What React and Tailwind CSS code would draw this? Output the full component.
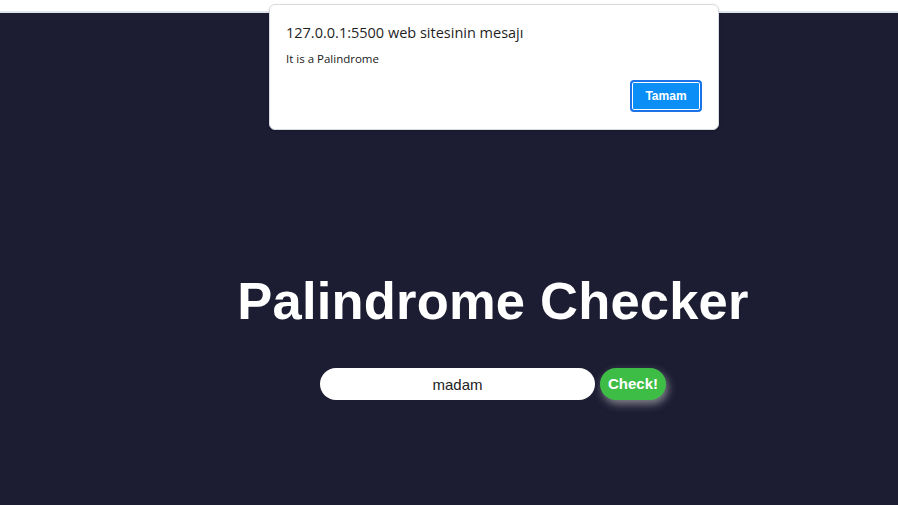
import React from "react";

const App = () => {
  return (
    <div className="relative w-[898px] h-[505px] overflow-hidden bg-white">
      <div className="h-[11px] bg-white" />
      <div className="h-[2px] bg-[#dfe3ea]" />
      {/* pagina principal */}
      <div className="h-[492px] bg-[#1c1c33] flex flex-col items-center pl-[88px] pt-[258px] font-['Liberation_Sans',Arial,sans-serif]">
        <h1 className="text-white font-bold text-[52.5px] leading-[60px] tracking-[0.2px]">
          Palindrome Checker
        </h1>
        <div className="flex items-center gap-[5px] mt-[37px]">
          <input
            defaultValue="madam"
            className="w-[275px] h-[32px] rounded-full bg-white text-center text-[15px] text-[#222] outline-none font-['Liberation_Sans',Arial,sans-serif]"
          />
          <button className="h-[32px] w-[66px] rounded-full bg-[#3ebd46] text-white font-bold text-[15px] shadow-[2px_4px_8px_rgba(200,200,200,0.6)]">
            Check!
          </button>
        </div>
      </div>
      {/* alerta del navegador */}
      <div className="absolute left-[269px] top-[4px] w-[450px] h-[126px] bg-white rounded-[6px] border border-[#d7dbe0] shadow-sm font-['Open_Sans','Noto_Sans',sans-serif]">
        <div className="pl-[16px] pt-[17px] text-[14.5px] text-[#1f1f1f] leading-[22px]">
          127.0.0.1:5500 web sitesinin mesajı
        </div>
        <div className="pl-[16px] pt-[7px] text-[11.5px] text-[#202020] leading-[16px]">
          It is a Palindrome
        </div>
        <div className="flex justify-end pr-[16px] pt-[13px]">
          <button className="w-[72px] h-[32px] rounded-[4px] bg-[#0b8ff6] border-2 border-[#1a73e8] ring-1 ring-inset ring-white text-white font-bold text-[12px] font-['Liberation_Sans',Arial,sans-serif]">
            Tamam
          </button>
        </div>
      </div>
    </div>
  );
};

export default App;
